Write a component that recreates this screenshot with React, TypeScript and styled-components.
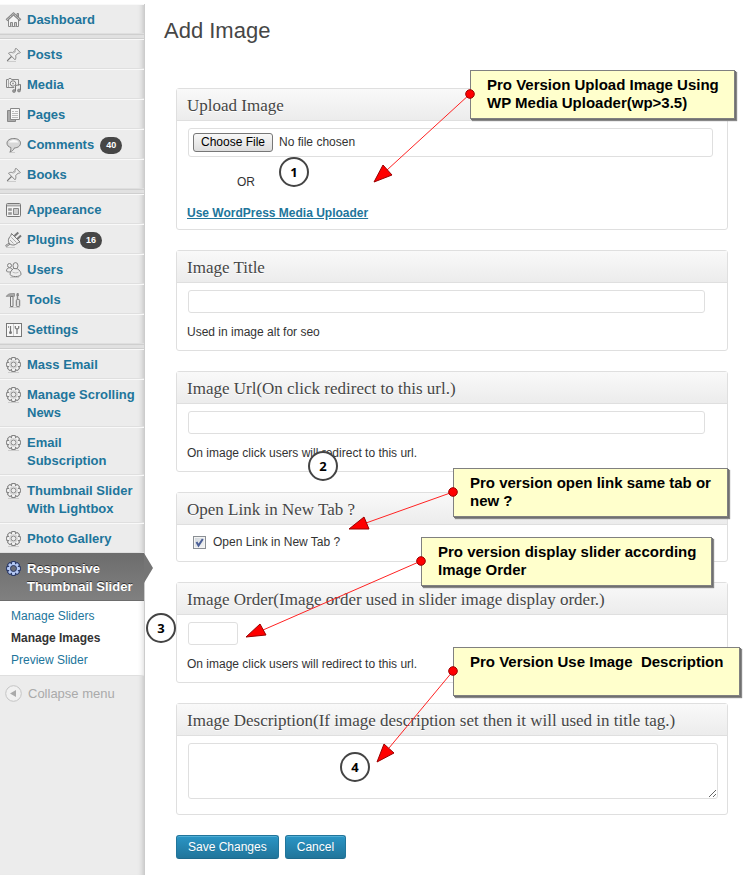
import React from "react";
import styled, { createGlobalStyle, css } from "styled-components";

const GlobalStyle = createGlobalStyle`
  *, *::before, *::after { box-sizing: border-box; }
  body {
    margin: 0;
    background: #fff;
    color: #333;
    font: 12px/18px "Liberation Sans", Arial, sans-serif;
  }
`;

/* ---------- shell ---------- */

const Page = styled.div`
  position: relative;
  display: flex;
  min-height: 100vh;
  overflow: hidden;
`;

const Sidebar = styled.nav`
  flex: 0 0 145px;
  margin-top: 4px;
  background: #ececec;
  border-right: 1px solid #ccc;
  box-shadow: inset -6px 0 6px -6px rgba(0, 0, 0, 0.25);
`;

const MenuList = styled.ul`
  list-style: none;
  margin: 0;
  padding: 0;
`;

const Separator = styled.hr`
  height: 5px;
  margin: 0;
  border: solid #cfcfcf;
  border-width: 1px 0;
  background: #e1e1e1;
`;

const MenuLink = styled.a<{ $active?: boolean }>`
  position: relative;
  display: grid;
  grid-template-columns: 16px 1fr;
  column-gap: 6px;
  padding: 6px 0 4px 5px;
  border-top: 1px solid #f9f9f9;
  border-bottom: 1px solid #dfdfdf;
  color: #21759b;
  font-size: 13px;
  font-weight: bold;
  text-decoration: none;
  ${(p) =>
    p.$active &&
    css`
      color: #fff;
      text-shadow: 0 -1px 0 #333;
      border-top-color: #6d6d6d;
      border-bottom-color: #6d6d6d;
      background: linear-gradient(#6d6d6d, #808080);
    `}
`;

const ActivePointer = styled.svg`
  position: absolute;
  top: -1px;
  left: 100%;
  width: 10px;
  height: 30px;
`;

const MenuIcon = styled.svg`
  display: block;
  width: 17px;
  height: 18px;
`;

const Label = styled.span`
  display: flex;
  align-items: center;
  gap: 6px;
`;

const Badge = styled.span`
  height: 17px;
  padding: 0 6px;
  border-radius: 9px;
  background: #464646;
  color: #fff;
  font-size: 9px;
  line-height: 17px;
`;

const SubMenu = styled.ul`
  list-style: none;
  margin: 0;
  padding: 4px 0;
  background: #fff;
  box-shadow: inset -6px 0 6px -6px rgba(0, 0, 0, 0.2);
`;

const SubLink = styled.a<{ $current?: boolean }>`
  display: block;
  padding: 2px 0 2px 11px;
  text-decoration: none;
  color: ${(p) => (p.$current ? "#333" : "#21759b")};
  font-weight: ${(p) => (p.$current ? "bold" : "normal")};
`;

const CollapseButton = styled.button`
  display: flex;
  align-items: center;
  gap: 6px;
  width: 100%;
  height: 36px;
  padding: 0 0 0 5px;
  border: 0;
  border-top: 1px solid #dfdfdf;
  background: transparent;
  color: #aaa;
  font: 13px/18px "Liberation Sans", Arial, sans-serif;
`;

/* ---------- form ---------- */

const Main = styled.main`
  flex: 1;
  min-width: 0;
  padding: 16px 22px 16px 19px;
`;

const Title = styled.h1`
  margin: 0 0 42px;
  color: #464646;
  font-size: 22px;
  font-weight: normal;
  line-height: 30px;
`;

const Form = styled.form`
  display: flex;
  flex-direction: column;
  gap: 20px;
  margin-left: 12px;
`;

const Panel = styled.section`
  border: 1px solid #dfdfdf;
  border-radius: 3px;
`;

const PanelTitle = styled.h2`
  margin: 0;
  padding: 8px 10px 5px;
  border-bottom: 1px solid #dfdfdf;
  background: linear-gradient(#f9f9f9, #ececec);
  color: #464646;
  font: normal 17px/18px "Liberation Serif", Georgia, serif;
  text-shadow: 0 1px 0 #fff;
`;

const PanelBody = styled.div<{ $inset?: number }>`
  display: flex;
  flex-direction: column;
  align-items: flex-start;
  padding: 7px ${(p) => p.$inset ?? 22}px 9px 11px;
`;

const fieldStyle = css`
  border: 1px solid #dfdfdf;
  border-radius: 3px;
  background: #fff;
  color: #333;
  font: 12px/15px "Liberation Sans", Arial, sans-serif;
`;

const TextInput = styled.input<{ $short?: boolean }>`
  ${fieldStyle}
  width: ${(p) => (p.$short ? "50px" : "100%")};
  height: 23px;
  padding: 3px;
`;

const FileInput = styled.input`
  ${fieldStyle}
  width: 100%;
  height: 29px;
  padding: 4px;
  &::file-selector-button {
    height: 19px;
    margin: 0 6px 0 0;
    padding: 0 7px;
    border: 1px solid #777;
    border-radius: 3px;
    background: linear-gradient(#f8f8f8, #ddd);
    color: #000;
    font: 12px/15px "Liberation Sans", Arial, sans-serif;
  }
`;

const TextArea = styled.textarea`
  ${fieldStyle}
  display: block;
  width: 100%;
  height: 56px;
  margin-bottom: 6px;
  padding: 3px;
  resize: both;
`;

const Help = styled.p`
  margin: 10px 0 0 -1px;
`;

const OrText = styled.p`
  margin: 16px 0 13px 49px;
`;

const MediaLink = styled.a`
  margin: 0 0 -2px -1px;
  color: #21759b;
  font-weight: bold;
`;

const CheckLabel = styled.label`
  display: flex;
  align-items: center;
  gap: 7px;
  padding: 1px 5px;
`;

const CheckBox = styled.span`
  display: grid;
  width: 13px;
  height: 13px;
  > * {
    grid-area: 1 / 1;
  }
  svg {
    display: none;
    pointer-events: none;
  }
  input:checked + svg {
    display: block;
  }
`;

const CheckInput = styled.input`
  appearance: none;
  width: 13px;
  height: 13px;
  margin: 0;
  border: 1px solid #8a8f94;
  background: linear-gradient(135deg, #cfd5db, #f6f6f6);
  box-shadow: inset 0 0 0 1px #f4f4f4;
`;

const Actions = styled.div`
  display: flex;
  gap: 6px;
`;

const Button = styled.button`
  height: 24px;
  padding: 0 11px;
  border: 1px solid #21759b;
  border-bottom-color: #1e6a8d;
  border-radius: 3px;
  background: linear-gradient(#2a95c5, #21759b);
  box-shadow: inset 0 1px 0 rgba(120, 200, 230, 0.5);
  color: #fff;
  font: 12px/18px "Liberation Sans", Arial, sans-serif;
  text-shadow: 0 1px 0 rgba(0, 0, 0, 0.1);
`;

/* ---------- annotations lying over the page ---------- */

const Overlay = styled.div`
  position: absolute;
  inset: 0;
  pointer-events: none;
`;

const Arrows = styled.svg`
  position: absolute;
  top: 0;
  left: 0;
`;

const Callout = styled.div<{ $x: number; $y: number; $w: number }>`
  position: absolute;
  left: ${(p) => p.$x}px;
  top: ${(p) => p.$y}px;
  width: ${(p) => p.$w}px;
  height: 49px;
  padding: 5px 8px 5px 16px;
  border: 1px solid #808080;
  background: #ffffcc;
  box-shadow: 1px 1px 0 #707070, 2px 2px 1px #888;
  color: #000;
  font-size: 15px;
  font-weight: bold;
  white-space: pre;
`;

const Marker = styled.span<{ $x: number; $y: number }>`
  position: absolute;
  left: ${(p) => p.$x - 15}px;
  top: ${(p) => p.$y - 15}px;
  width: 30px;
  height: 30px;
  border: 2px solid #444;
  border-radius: 50%;
  background: #fff;
  color: #000;
  font: bold 13px/26px "Open Sans", sans-serif;
  text-align: center;
`;

/* ---------- icons, 17 x 18 boxes ---------- */

const gearTeeth = [0, 45, 90, 135, 180, 225, 270, 315];

const GearShape = ({ grow, color }: { grow: number; color: string }) => (
  <g fill={color}>
    {gearTeeth.map((a) => (
      <rect key={a} x={7 - grow} y={2 - grow} width={3 + grow * 2} height={5} rx="1"
        transform={`rotate(${a} 8.5 8.5)`} />
    ))}
    <circle cx="8.5" cy="8.5" r={4.6 + grow} />
  </g>
);

const Gear = () => (
  <>
    <path d="M3 16.5h11" stroke="#ccc" />
    <GearShape grow={0.9} color="#838383" />
    <GearShape grow={0} color="#f4f4f4" />
    <circle cx="8.5" cy="8.5" r="2.5" fill="#ececec" stroke="#838383" />
    <circle cx="8.5" cy="8.5" r="3.900" stroke="#bbb" strokeWidth=".7" />
  </>
);

const GearActive = () => (
  <>
    <GearShape grow={0.9} color="#2b3a68" />
    <GearShape grow={0} color="#b4c8f4" />
    <circle cx="8.5" cy="8.5" r="3" fill="#6a6d78" stroke="#2b3a68" />
  </>
);

const Pin = () => (
  <>
    <path d="M2 15.5h9" stroke="#ccc" />
    <path d="M2.2 14.8 7 10" stroke="#777" strokeWidth="1.2" />
    <path d="M3.5 7.2c1.4-1 3-1 4.1-.5L10.300 4.300c-.3-.9-.1-1.600.7-2.100l4.300 4.300c-.6.8-1.300.9-2.200.6L10.600 9.800c.5 1.300.4 2.700-.6 4z"
      fill="#eee" stroke="#888" />
    <path d="m8.500 7.500 2.500-2.300" stroke="#bbb" />
  </>
);

const icons: Record<string, React.ReactNode> = {
  home: (
    <>
      <path d="M3.500 8.500V15.500h10V8.500L8.500 4z" fill="#f4f4f4" stroke="#888" />
      <path d="M12 2.500h1.500V6L12 4.800z" fill="#ccc" stroke="#888" />
      <path d="M1.500 9.300 8.500 2.700l7 6.600" fill="none" stroke="#888" strokeWidth="2.600" />
      <path d="M1.800 9 8.500 2.800 15.200 9" fill="none" stroke="#ddd" strokeWidth=".9" strokeDasharray="1.500 .7" />
      <path d="M5.500 15.500v-4h2v4M9.500 15.500v-4h2v4" fill="#ccc" stroke="#888" />
    </>
  ),
  pin: <Pin />,
  media: (
    <>
      <path d="M1.500 3.500h2l.5-1h2l.5 1h7v8h-12z" fill="#eee" stroke="#888" />
      <path d="M3.500 4v7" stroke="#aaa" />
      <circle cx="8" cy="7.500" r="2.700" fill="#f8f8f8" stroke="#777" />
      <circle cx="8" cy="7.500" r="1" fill="#999" />
      <path d="M9.500 9.500h7v7h-8z" fill="#ececec" />
      <path d="M10.500 15V9.500l5-1V14" fill="none" stroke="#777" />
      <circle cx="9" cy="15" r="1.500" fill="#999" stroke="#777" strokeWidth=".6" />
      <circle cx="14" cy="14.500" r="1.500" fill="#999" stroke="#777" strokeWidth=".6" />
    </>
  ),
  pages: (
    <>
      <path d="M2.500 4.500h8v11h-8z" fill="#aaa" stroke="#888" />
      <path d="M5.500 2.500h9v11h-9z" fill="#f8f8f8" stroke="#888" />
      <path d="M7 5.500h2m1 0h3M7 7.500h6M7 9.500h6M7 11.500h6" stroke="#bbb" />
    </>
  ),
  comment: (
    <>
      <path d="M4 16.500h6" stroke="#ccc" />
      <path d="M8.800 2.500c4 0 6.700 1.900 6.700 4.700s-2.700 4.600-6 4.700c-1 2.100-2.300 3.400-4.500 3.900.8-1.300 1-2.600.8-4.300C3.400 10.800 2 9.300 2 7.200c0-2.800 2.800-4.700 6.800-4.700z"
        fill="#d8d8d8" stroke="#808080" />
      <path d="M4 6.500c.6-1.600 2.300-2.500 4.700-2.500s4 .8 4.700 2.500z" fill="#fafafa" />
    </>
  ),
  appearance: (
    <>
      <rect x="1.500" y="2.500" width="14" height="13" rx="1" fill="#f4f4f4" stroke="#777" />
      <path d="M2 4.500h13" stroke="#aaa" strokeWidth="2" />
      <path d="M3.500 7.500h3v2h-3zM3.500 11.500h3v2h-3z" fill="#999" stroke="#aaa" />
      <path d="M8.500 7.500h5v6h-5z" fill="#ccc" stroke="#888" />
    </>
  ),
  plug: (
    <>
      <path d="M1 16.500h9" stroke="#ccc" />
      <path d="M1 15.500c1.500-2.500 2-1.200 3.500-3" fill="none" stroke="#777" strokeWidth="2.200" />
      <path d="M1 15.500c1.500-2.500 2-1.200 3.500-3" fill="none" stroke="#eee" strokeWidth=".8" />
      <path d="m9.500 5 3.800-3.500M12.300 8 16 4.500" stroke="#777" strokeWidth="2" />
      <path d="M6.500 2.500l8.500 8.500c-2.600.2-3.700 2.900-6.200 3-3.700.2-6-2.200-5.300-5.600C4 6 6.400 5 6.500 2.500z" fill="#eee" stroke="#777" />
      <path d="m6.300 6.300 5.200 5.200M5 9l3.500 3.500" stroke="#aaa" />
    </>
  ),
  users: (
    <>
      <path d="M5 16.500h9" stroke="#ccc" />
      <circle cx="4.500" cy="4.500" r="2" fill="#eee" stroke="#808080" />
      <path d="M1.500 10c0-2 1.200-3.200 3-3.200S7.500 8 7.500 10c0 1.300-6 1.300-6 0z" fill="#eee" stroke="#808080" />
      <ellipse cx="10.500" cy="4.800" rx="2.500" ry="3.200" fill="#eee" stroke="#808080" />
      <path d="M8.500 7.500c-2.300 2-3.600 4-3.400 5.800.2 3 10.600 3 10.900 0 .1-2-1.500-4.300-3.600-5.500z" fill="#eee" stroke="#808080" />
      <path d="M7.500 11c2 1.200 4 1.200 6 .2" fill="none" stroke="#bbb" />
    </>
  ),
  tools: (
    <>
      <path d="M4 16.500h11" stroke="#ccc" />
      <path d="M1.300 5.500C2.500 3 4.500 2.500 9.500 2.500v2.800L5 5.200c-1.500 0-2.500 0-3.700.3z" fill="#aaa" stroke="#888" strokeWidth=".8" />
      <path d="M5.500 5.500h2.500v10H5.500z" fill="#eee" stroke="#777" />
      <path d="M12.500 2v6" stroke="#888" strokeWidth="1.400" />
      <path d="M11.500 3l2-1 .5 3h-2.500z" fill="#888" />
      <rect x="11.300" y="8.500" width="3.400" height="7" rx="1" fill="#ddd" stroke="#777" />
    </>
  ),
  settings: (
    <>
      <rect x="1.500" y="2.500" width="15" height="13" fill="#f8f8f8" stroke="#777" />
      <path d="M8.500 3v12" stroke="#ccc" />
      <path d="M5.500 5v6M12 7.500V13" stroke="#777" strokeWidth="1.200" />
      <circle cx="5.500" cy="11.500" r="1.500" fill="#777" />
      <path d="M10.300 5v2c1 1.300 2.500 1.300 3.400 0V5" fill="none" stroke="#777" strokeWidth="1.200" />
      <path d="M3.500 5v2" stroke="#999" />
    </>
  ),
  gear: <Gear />,
  gearActive: <GearActive />,
};

/* ---------- data ---------- */

type Item = { label: React.ReactNode; icon: string; count?: number; active?: boolean };

const groups: Item[][] = [
  [{ label: "Dashboard", icon: "home" }],
  [
    { label: "Posts", icon: "pin" },
    { label: "Media", icon: "media" },
    { label: "Pages", icon: "pages" },
    { label: "Comments", icon: "comment", count: 40 },
    { label: "Books", icon: "pin" },
  ],
  [
    { label: "Appearance", icon: "appearance" },
    { label: "Plugins", icon: "plug", count: 16 },
    { label: "Users", icon: "users" },
    { label: "Tools", icon: "tools" },
    { label: "Settings", icon: "settings" },
  ],
  [
    { label: "Mass Email", icon: "gear" },
    { label: "Manage Scrolling News", icon: "gear" },
    { label: <>Email<br />Subscription</>, icon: "gear" },
    { label: "Thumbnail Slider With Lightbox", icon: "gear" },
    { label: "Photo Gallery", icon: "gear" },
    { label: "Responsive Thumbnail Slider", icon: "gearActive", active: true },
  ],
];

const subItems = ["Manage Sliders", "Manage Images", "Preview Slider"];

const callouts = [
  { x: 470, y: 70, w: 265, text: "Pro Version Upload Image Using\nWP Media Uploader(wp>3.5)" },
  { x: 453, y: 468, w: 275, text: "Pro version open link same tab or\nnew ?" },
  { x: 421, y: 537, w: 291, text: "Pro version display slider according\nImage Order" },
  { x: 453, y: 647, w: 287, text: "Pro Version Use Image  Description" },
];

const arrows = [
  { from: [470, 94], to: [387, 170], head: "374,182 383,165 392,175" },
  { from: [453, 492], to: [366, 523], head: "349,529 364,517 369,529" },
  { from: [421, 561], to: [263, 630], head: "246,637 260,624 266,635" },
  { from: [453, 671], to: [389, 748], head: "377,762 384,744 394,753" },
];

const markers = [
  [294, 172],
  [323, 466],
  [161, 628],
  [355, 767],
];

export default function App() {
  return (
    <>
      <GlobalStyle />
      <Page>
        <Sidebar aria-label="Admin menu">
          {groups.map((group, g) => (
            <React.Fragment key={g}>
              {g > 0 && <Separator />}
              <MenuList>
                {group.map((item, i) => (
                  <li key={i}>
                    <MenuLink href="#" $active={item.active}>
                      <MenuIcon viewBox="0 0 17 18" fill="none" aria-hidden="true">
                        {icons[item.icon]}
                      </MenuIcon>
                      <Label>
                        <span>{item.label}</span>
                        {item.count && <Badge>{item.count}</Badge>}
                      </Label>
                      {item.active && (
                        <ActivePointer viewBox="0 0 10 30" aria-hidden="true">
                          <path d="M0 0 9 15 0 30z" fill="#757575" />
                        </ActivePointer>
                      )}
                    </MenuLink>
                    {item.active && (
                      <SubMenu>
                        {subItems.map((s) => (
                          <li key={s}>
                            <SubLink href="#" $current={s === "Manage Images"}>{s}</SubLink>
                          </li>
                        ))}
                      </SubMenu>
                    )}
                  </li>
                ))}
              </MenuList>
            </React.Fragment>
          ))}
          <CollapseButton type="button">
            <svg width="17" height="17" viewBox="0 0 17 17" aria-hidden="true">
              <circle cx="8.500" cy="8.500" r="7.800" fill="#f1f1f1" stroke="#c4c4c4" />
              <path d="M5 8.500 11 5v7z" fill="#aaa" />
            </svg>
            Collapse menu
          </CollapseButton>
        </Sidebar>

        <Main>
          <Title>Add Image</Title>
          <Form onSubmit={(e) => e.preventDefault()}>
            <Panel>
              <PanelTitle id="t-file">Upload Image</PanelTitle>
              <PanelBody $inset={14}>
                <FileInput type="file" aria-labelledby="t-file" />
                <OrText>OR</OrText>
                <MediaLink href="#">Use WordPress Media Uploader</MediaLink>
              </PanelBody>
            </Panel>
            <Panel>
              <PanelTitle id="t-title">Image Title</PanelTitle>
              <PanelBody>
                <TextInput type="text" aria-labelledby="t-title" />
                <Help>Used in image alt for seo</Help>
              </PanelBody>
            </Panel>
            <Panel>
              <PanelTitle id="t-url">Image Url(On click redirect to this url.)</PanelTitle>
              <PanelBody>
                <TextInput type="text" aria-labelledby="t-url" />
                <Help>On image click users will redirect to this url.</Help>
              </PanelBody>
            </Panel>
            <Panel>
              <PanelTitle>Open Link in New Tab ?</PanelTitle>
              <PanelBody>
                <CheckLabel>
                  <CheckBox>
                    <CheckInput type="checkbox" defaultChecked />
                    <svg width="13" height="13" viewBox="0 0 13 13" aria-hidden="true">
                      <path d="M3.500 6 5.500 9.500 9.800 3" fill="none" stroke="#4b5f97" strokeWidth="2" />
                    </svg>
                  </CheckBox>
                  Open Link in New Tab ?
                </CheckLabel>
              </PanelBody>
            </Panel>
            <Panel>
              <PanelTitle id="t-order">Image Order(Image order used in slider image display order.)</PanelTitle>
              <PanelBody>
                <TextInput type="text" $short aria-labelledby="t-order" />
                <Help>On image click users will redirect to this url.</Help>
              </PanelBody>
            </Panel>
            <Panel>
              <PanelTitle id="t-desc">Image Description(If image description set then it will used in title tag.)</PanelTitle>
              <PanelBody $inset={9}>
                <TextArea aria-labelledby="t-desc" />
              </PanelBody>
            </Panel>
            <Actions>
              <Button type="submit">Save Changes</Button>
              <Button type="button">Cancel</Button>
            </Actions>
          </Form>
        </Main>

        <Overlay>
          {callouts.map((c) => (
            <Callout key={c.text} $x={c.x} $y={c.y} $w={c.w}>{c.text}</Callout>
          ))}
          <Arrows width="750" height="875" viewBox="0 0 750 875" aria-hidden="true">
            {arrows.map((a) => (
              <g key={a.head}>
                <path d={`M${a.from.join(" ")} L${a.to.join(" ")}`} stroke="#f22" strokeWidth="1" />
                <polygon points={a.head} fill="#f00" stroke="#900" strokeWidth="1" />
                <circle cx={a.from[0]} cy={a.from[1]} r="4.300" fill="#f00" stroke="#900" />
              </g>
            ))}
          </Arrows>
          {markers.map(([x, y], i) => (
            <Marker key={i} $x={x} $y={y}>{i + 1}</Marker>
          ))}
        </Overlay>
      </Page>
    </>
  );
}
